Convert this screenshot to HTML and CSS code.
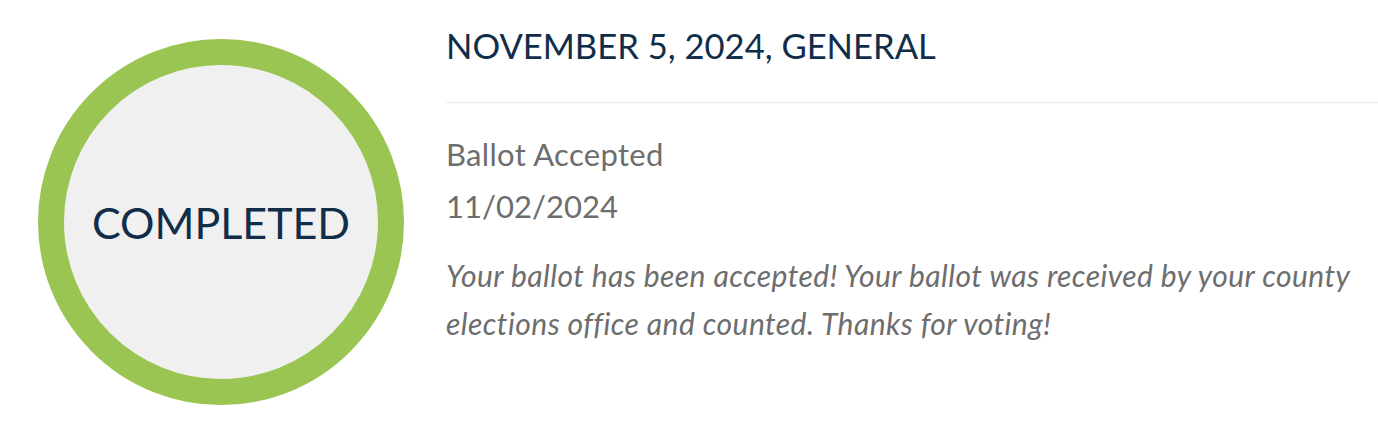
FILE: index.html
```html
<!DOCTYPE html>
<html lang="en">

<head>
    <meta charset="UTF-8">
    <meta name="viewport" content="width=device-width, initial-scale=1.0">
    <link rel="stylesheet" href="styles.css">
</head>

<body>
    <div class="status-card">
        <div class="status-ring">
            <div class="status-label">COMPLETED</div>
        </div>
        <div class="details">
            <h2 class="election">NOVEMBER 5, 2024, GENERAL</h2>
            <div class="status-name">Ballot Accepted</div>
            <div class="status-date">11/02/2024</div>
            <p class="message">Your ballot has been accepted! Your ballot was received by your county elections office and counted. Thanks for voting!</p>
        </div>
    </div>
</body>

</html>
```

FILE: styles.css
```css
body {
    margin: 0;
    background: #ffffff;
    font-family: "Lato", "Liberation Sans", sans-serif;
}

.status-card {
    display: flex;
    align-items: flex-start;
    gap: 42px;
    padding: 25px 0 0 38px;
}

.status-ring {
    flex: none;
    width: 314px;
    height: 314px;
    margin-top: 14px;
    border: 26px solid #9bc553;
    border-radius: 50%;
    background: #f0f0f0;
    display: flex;
    justify-content: center;
    align-items: center;
}

.status-label {
    font-size: 43px;
    color: #102d4a;
}

.details {
    flex: 1;
}

.election {
    margin: 0;
    padding-bottom: 35px;
    border-bottom: 1px solid #ececec;
    font-size: 34.6px;
    font-weight: normal;
    color: #102d4a;
    line-height: 42px;
}

.status-name,
.status-date {
    font-size: 31px;
    color: #6d6d6d;
    line-height: 52px;
}

.status-name {
    margin-top: 25px;
    letter-spacing: 0.3px;
}

.message {
    margin: 19px 0 0 0;
    font-size: 30px;
    font-style: italic;
    letter-spacing: 0.45px;
    color: #6d6d6d;
    line-height: 48px;
}
```
